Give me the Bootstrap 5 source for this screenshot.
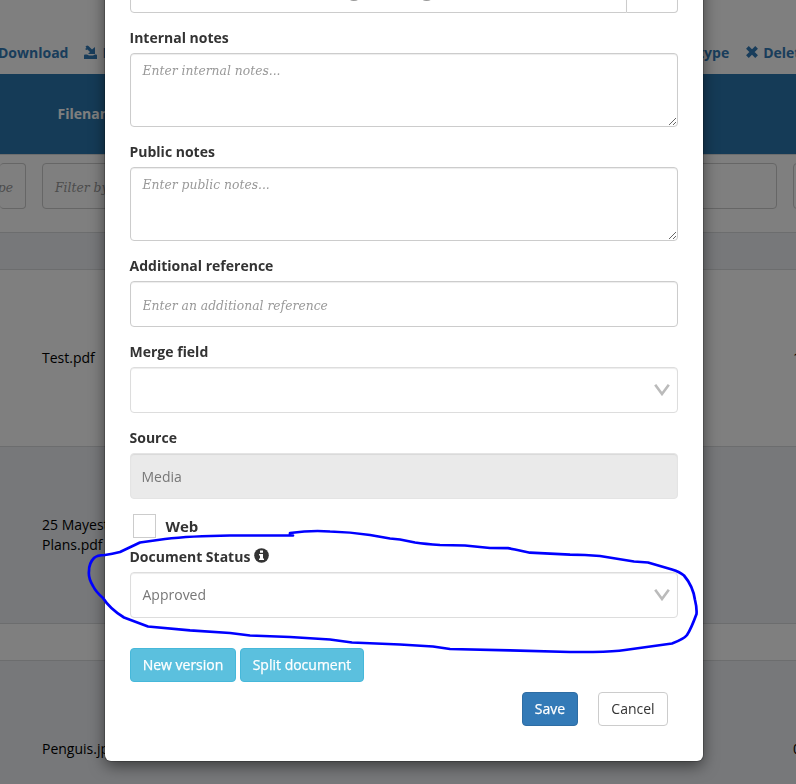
<!DOCTYPE html>
<html lang="en">
<head>
<meta charset="utf-8">
<meta name="viewport" content="width=device-width, initial-scale=1">
<title>Edit document</title>
<link href="https://cdn.jsdelivr.net/npm/bootstrap@5.3.0/dist/css/bootstrap.min.css" rel="stylesheet">
<style>
html,body{height:100%;overflow:hidden}
body{font:14px/20px "Open Sans",sans-serif;color:#333}
.page{height:784px;overflow:hidden}
.toolbar-links{height:74px;padding-top:43px;color:#337ab7;font-weight:700}
.toolbar-links .grp-left{width:700px;margin-left:-2px}
.toolbar-links span,.toolbar-links svg{flex:none}
.doc-table{width:1000px;table-layout:fixed;border-collapse:separate;border-spacing:0;color:#000}
.doc-table th{height:80px;background:#2a76ae;color:#fff;padding:0 23.5px;vertical-align:middle}
.doc-table td{height:177px;padding:0 8px;border-top:1px solid #d8dadc;vertical-align:middle;white-space:nowrap}
.doc-table .filters td{height:78px;padding-top:8px;vertical-align:top}
.doc-table .spacer td{height:37px}
.doc-table .shade td{background:#eef0f4}
.filter-box{height:46px;border:1px solid #ccc;border-radius:4px;padding:3px 12px 0}
.serif,.form-control::placeholder{font-family:"DejaVu Serif",serif;font-style:italic;font-size:12.35px;color:#999;opacity:1}
.modal{overflow:hidden}
.modal-backdrop{opacity:.5}
.modal-dialog{position:fixed;left:105px;bottom:23px;width:598px;max-width:none;margin:0}
.modal-content{border:0;border-radius:6px;box-shadow:0 5px 15px rgba(0,0,0,.5),0 0 0 1px rgba(0,0,0,.2);padding:15px 25px 35px;color:#333}
.fld{margin-bottom:15px}
.fld>label{display:block;height:20px;margin:0 0 5px -.5px;font-weight:700}
.form-control,.form-select{height:46px;font-size:14px;line-height:20px;border:1px solid #ccc;border-radius:4px;padding:6px 11.5px;color:#777;box-shadow:inset 0 1px 1px rgba(0,0,0,.075)}
textarea.form-control{height:74px;min-height:0;display:block;padding-top:7px}
.pick{border-color:#ddd;padding-right:7.5px}
.form-control:disabled{background:#eaeaea;border-color:#e4e4e4;padding-left:10.5px;color:#777}
.upload-name{width:497px;padding:0 0 2px 218px;gap:62px;font-size:20px;color:#999;line-height:24px}
.web-row{height:48px;margin-top:-15px;padding:6px 0 0 3px;gap:9.5px;font-size:15px;font-weight:700}
.tick{width:23px;height:24px;border:1px solid #ccc}
.btn{height:34px;border-radius:4px;font-size:14px;line-height:20px;padding:6px 0;text-align:center}
.btn-info{background:#5bc0de;border-color:#46b8da;color:#fff;-webkit-text-stroke:.25px #fff}
.btn-primary{background:#337ab7;border-color:#2e6da4;-webkit-text-stroke:.25px #fff}
.w-new{width:106px}.w-split{width:124px}.w-save{width:56px}.w-cancel{width:70px}
.btn-cancel{background:#fff;border-color:#ccc;color:#333}
.doc-actions{margin-top:30px}
.end-actions{margin-top:10px;padding-right:10px;gap:20px}
.info-dot{vertical-align:-1px}
.scribble{position:fixed;left:0;top:0;z-index:2000;pointer-events:none}
</style>
<script src="https://cdn.jsdelivr.net/npm/bootstrap@5.3.0/dist/js/bootstrap.bundle.min.js"></script>
</head>
<body>
<div class="page">
<div class="toolbar-links d-flex">
  <div class="grp-left d-flex flex-shrink-0">
    <span>Download</span>
    <svg class="ms-3" width="14" height="20" viewBox="0 0 14 20" fill="currentColor"><path d="M0 12.500q0-1 1-1h2l2 1h4l2-1h1q1 0 1 1V16H0zM1.500 3.500l1.500-1 1.500.5L8 6.500 11 4v7H4l2-2-2.500-2.500-1 .5L1 6l1.500-1z"/></svg>
    <span class="ms-1">Merge</span>
  </div>
  <span>type</span>
  <svg class="ms-3" width="14" height="20" viewBox="-1 0 14 20" fill="none" stroke="currentColor" stroke-width="3.8"><path d="M1.400 4.400l9.200 9.200M10.600 4.400l-9.200 9.200"/></svg>
  <span class="ms-1">Delete</span>
</div>
<table class="doc-table">
  <colgroup><col style="width:34px"><col style="width:266px"><col style="width:485px"><col></colgroup>
  <thead><tr><th></th><th>Filename</th><th></th><th></th></tr></thead>
  <tbody>
    <tr class="filters">
      <td class="ps-0"><div class="filter-box serif d-flex align-items-center justify-content-end border-start-0">type</div></td>
      <td><div class="filter-box serif d-flex align-items-center">Filter by filename</div></td>
      <td><div class="filter-box"></div></td>
      <td><div class="filter-box"></div></td>
    </tr>
    <tr class="spacer shade"><td></td><td></td><td></td><td></td></tr>
    <tr><td></td><td>Test.pdf</td><td></td><td>1</td></tr>
    <tr class="shade"><td></td><td>25 Mayest<br>Plans.pdf</td><td></td><td></td></tr>
    <tr class="spacer"><td></td><td></td><td></td><td></td></tr>
    <tr class="shade"><td></td><td>Penguis.jpg</td><td></td><td>0</td></tr>
  </tbody>
</table>
</div>

<div class="modal-backdrop"></div>
<div class="modal d-block" tabindex="-1">
  <div class="modal-dialog">
    <div class="modal-content">
      <div class="fld d-flex">
        <div class="form-control upload-name d-flex align-items-center rounded-end-0"><span>g</span><span>g</span></div>
        <div class="form-control rounded-start-0 border-start-0 flex-grow-1 w-auto"></div>
      </div>
      <div class="fld"><label>Internal notes</label><textarea class="form-control" placeholder="Enter internal notes..."></textarea></div>
      <div class="fld"><label>Public notes</label><textarea class="form-control" placeholder="Enter public notes..."></textarea></div>
      <div class="fld"><label>Additional reference</label><input class="form-control" placeholder="Enter an additional reference"></div>
      <div class="fld"><label>Merge field</label>
        <div class="form-control pick d-flex align-items-center justify-content-between"><span></span>
          <svg width="16" height="12" viewBox="0 0 16 12" fill="none" stroke="#bbb" stroke-width="2.6"><path d="M1.200 .8L8 10 14.800 .8"/></svg></div></div>
      <div class="fld"><label>Source</label><input class="form-control" value="Media" disabled></div>
      <div class="web-row d-flex align-items-center"><span class="tick"></span><span>Web</span></div>
      <div class="fld mb-0"><label>Document Status
        <svg class="info-dot" width="15" height="15" viewBox="0 0 15 15"><circle cx="7.500" cy="7.500" r="7.300" fill="#333"/><path d="M6 2.600h3v2.200H6zM5 6h4v4.500h1v1.600H5v-1.600h1V7.500H5z" fill="#fff"/></svg></label>
        <div class="form-control pick d-flex align-items-center justify-content-between"><span>Approved</span>
          <svg width="16" height="12" viewBox="0 0 16 12" fill="none" stroke="#bbb" stroke-width="2.6"><path d="M1.200 .8L8 10 14.800 .8"/></svg></div></div>
      <div class="doc-actions d-flex gap-1"><button class="btn btn-info w-new">New version</button><button class="btn btn-info w-split">Split document</button></div>
      <div class="end-actions d-flex justify-content-end"><button class="btn btn-primary w-save">Save</button><button class="btn btn-cancel w-cancel">Cancel</button></div>
    </div>
  </div>
</div>

<svg class="scribble" width="796" height="784" fill="none" stroke="#00f" stroke-width="2.7" stroke-linejoin="round" stroke-linecap="round"><path d="M293 535.500H230Q190 536 165 539L140 542.500 120 552Q112 554 105 555 97 555 94 558 89 563 89 571 88 578 93 586 96 592 103 598 110 609 124 617.500L148 626.500 190 630.300 230 633 250 635.500 290 637 330 639.500 352 642.500 400 644.500 433 646.500 450 649 510 650.300 570 652H593Q615 651.500 625 650L672 643.500 Q684 639 687 635 691 629 696.500 614 697 608 695 600 693 586 684 575.500 680 572 672 569.500L648 562.500 634 561.500 600 556 585 555 570 554.700 530 552.700 515 549.500 508 548.200 490 548 465 545.500 440 545Q425 544 415 542.500L400 539.500 390 538.500 370 535Q350 532 330 531.500 312 530 290 533V534.500"/></svg>
</body>
</html>
